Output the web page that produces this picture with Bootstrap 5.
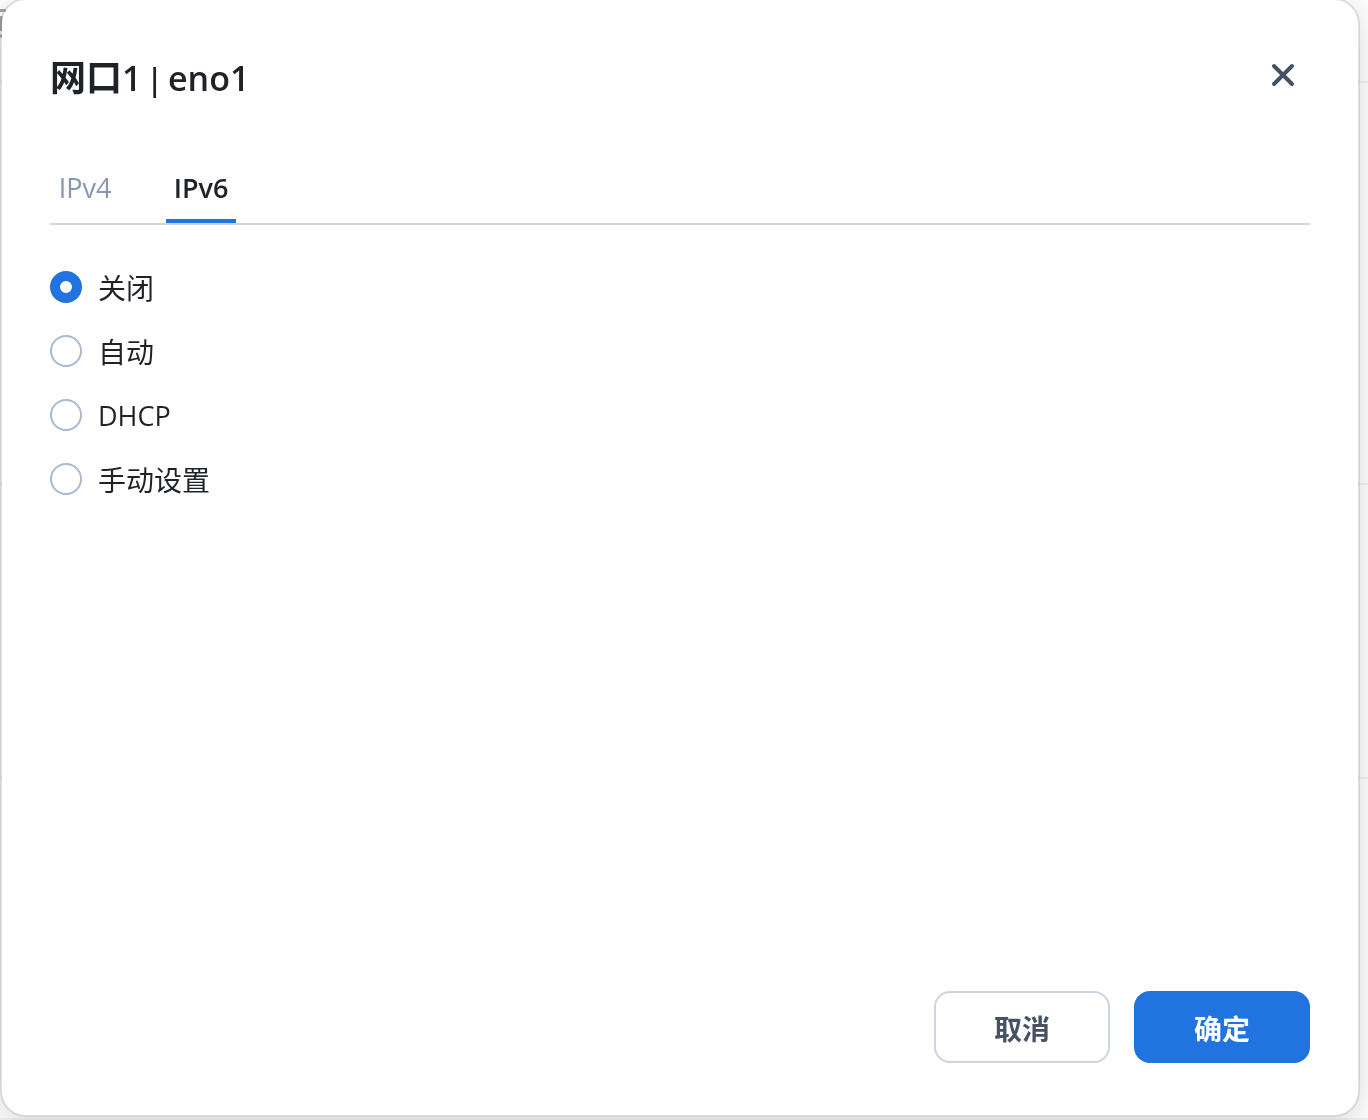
<!DOCTYPE html>
<html lang="zh-CN">
<head>
<meta charset="utf-8">
<meta name="viewport" content="width=device-width, initial-scale=1">
<title>网口1 | eno1</title>
<link href="https://cdn.jsdelivr.net/npm/bootstrap@5.3.0/dist/css/bootstrap.min.css" rel="stylesheet">
<style>
body{font-family:"Open Sans","Noto Sans CJK SC",sans-serif;font-size:28px;line-height:40px;color:#1f2328;background:#fcfcfc}
/* settings page that shows past the edges of the dialog */
.backdrop-page{position:fixed;inset:0;display:grid;grid-template-rows:83px 402px 294px 1fr}
.backdrop-page div{border-bottom:2px solid #ebeef2}
.backdrop-page div:last-child{border:0}
.page-glyph{position:absolute;left:0;top:8px}
.dialog-box{position:fixed;inset:-2px 8px 3px 0;border:2px solid rgba(60,70,70,.15);border-radius:26px;padding:48px 48px 52px;background:#fff;background-clip:padding-box;box-shadow:0 6px 24px rgba(0,0,0,.12)}
.dialog-title{font-size:36px;line-height:60px;font-weight:700;margin:0}
.dialog-title .name-part{font-size:34px;font-weight:600}
.dialog-title .bar-mark{font-family:"Liberation Sans",sans-serif;font-weight:400}
.latin{font-size:27px}
.close-x{width:54px;height:54px;padding:0;border:0;background:none;line-height:0}
.tab-row{margin-top:59px;gap:46px;border-bottom:2px solid #cbd5e1;flex-wrap:nowrap}
.tab-row .nav-link{width:70px;padding:0 0 11px;border-bottom:4px solid transparent;border-radius:0;color:#8796b3;font-size:27px;line-height:40px}
.tab-row .nav-link.active{color:#1f2328;font-weight:600;border-color:#2173df}
.choices{margin-top:41px;gap:22px}
.choices .form-check{display:flex;align-items:center;gap:16px;min-height:42px;margin:0;padding:0}
.choices label{padding-top:2px}
.choices .form-check-input{float:none;width:32px;height:32px;margin:0;border:2px solid #a9b9d0;background-image:none}
.choices .form-check-input:checked{border:10px solid #2173df;background:#fff}
.foot{gap:24px}
.foot .btn{width:176px;height:72px;padding:8px 12px 4px;border-radius:16px;font-size:28px;font-weight:700;border:2px solid #cbd5e1;color:#475166;background:#fff}
.foot .btn-ok{background:#2173df;border-color:#2173df;color:#fff}
</style>
<script src="https://cdn.jsdelivr.net/npm/bootstrap@5.3.0/dist/js/bootstrap.bundle.min.js"></script>
</head>
<body>
<div class="backdrop-page" aria-hidden="true">
<div></div><div></div><div></div><div></div>
<svg class="page-glyph" width="8" height="30" viewBox="0 0 8 30" fill="none" stroke="#a3a5aa" stroke-width="3"><path d="M0 2.500H6M1 8V23M0 28H2"/></svg>
</div>
<section class="dialog-box d-flex flex-column" role="dialog" aria-labelledby="dialogTitle">
<header class="d-flex justify-content-between align-items-start">
<h1 class="dialog-title" id="dialogTitle">网口<span class="name-part">1 <span class="bar-mark">|</span> eno1</span></h1>
<button class="close-x" type="button" aria-label="关闭"><svg width="54" height="54" viewBox="0 0 54 54" fill="none" stroke="#475166" stroke-width="4" stroke-linecap="round"><path d="M18 18L36 36M36 18L18 36"/></svg></button>
</header>
<nav class="nav tab-row">
<a class="nav-link text-center" href="#ipv4">IPv4</a>
<a class="nav-link text-center active" href="#ipv6" aria-current="page">IPv6</a>
</nav>
<form class="choices d-flex flex-column flex-grow-1" id="ipv6">
<div class="form-check"><input class="form-check-input" type="radio" name="mode" id="modeOff" checked><label for="modeOff">关闭</label></div>
<div class="form-check"><input class="form-check-input" type="radio" name="mode" id="modeAuto"><label for="modeAuto">自动</label></div>
<div class="form-check"><input class="form-check-input" type="radio" name="mode" id="modeDhcp"><label class="latin" for="modeDhcp">DHCP</label></div>
<div class="form-check"><input class="form-check-input" type="radio" name="mode" id="modeManual"><label for="modeManual">手动设置</label></div>
</form>
<footer class="foot d-flex justify-content-end">
<button class="btn" type="button">取消</button>
<button class="btn btn-ok" type="button">确定</button>
</footer>
</section>
</body>
</html>
